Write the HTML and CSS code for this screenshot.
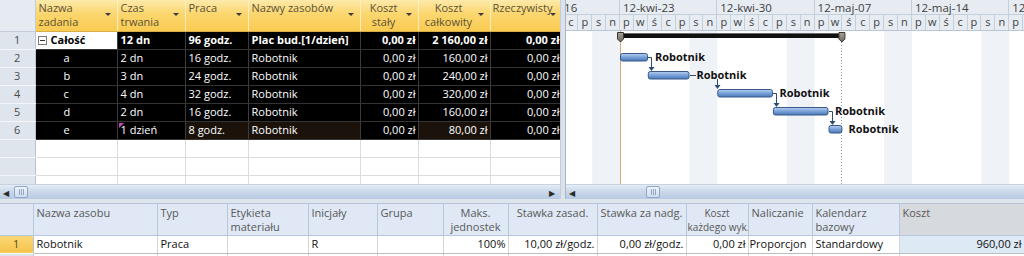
FILE: index.html
```html
<!DOCTYPE html>
<html lang="pl">
<head>
  <meta charset="UTF-8">
  <title>Projekt - Wykres Gantta</title>
  <link rel="stylesheet" href="styles.css">
</head>
<body>
<div class="app">
  <div class="top">
    <!-- Task sheet -->
    <div class="task-pane">
      <table class="tasks">
        <colgroup>
          <col style="width:35px"><col style="width:82px"><col style="width:68px"><col style="width:63px">
          <col style="width:112px"><col style="width:58px"><col style="width:72px"><col style="width:72px">
        </colgroup>
        <thead>
          <tr>
            <th class="corner"></th>
            <th class="dd">Nazwa<br>zadania</th>
            <th class="dd">Czas<br>trwania</th>
            <th class="dd">Praca</th>
            <th class="dd">Nazwy zasobów</th>
            <th class="dd center">Koszt<br>stały</th>
            <th class="dd center">Koszt<br>całkowity</th>
            <th class="dd last">Rzeczywisty</th>
          </tr>
        </thead>
        <tbody>
          <tr class="summary">
            <td class="rn">1</td>
            <td class="sel"><svg class="collapse" width="9" height="9" viewBox="0 0 9 9"><rect x="0.5" y="0.5" width="8" height="8" fill="#fff" stroke="#7b7b7b"/><path d="M2 4.5H7" stroke="#333"/></svg>Całość</td>
            <td>12 dn</td>
            <td>96 godz.</td>
            <td>Plac bud.[1/dzień]</td>
            <td class="num">0,00 zł</td>
            <td class="num">2 160,00 zł</td>
            <td class="num">0,00 zł</td>
          </tr>
          <tr>
            <td class="rn">2</td><td class="sub">a</td><td>2 dn</td><td>16 godz.</td><td>Robotnik</td>
            <td class="num">0,00 zł</td><td class="num">160,00 zł</td><td class="num">0,00 zł</td>
          </tr>
          <tr>
            <td class="rn">3</td><td class="sub">b</td><td>3 dn</td><td>24 godz.</td><td>Robotnik</td>
            <td class="num">0,00 zł</td><td class="num">240,00 zł</td><td class="num">0,00 zł</td>
          </tr>
          <tr>
            <td class="rn">4</td><td class="sub">c</td><td>4 dn</td><td>32 godz.</td><td>Robotnik</td>
            <td class="num">0,00 zł</td><td class="num">320,00 zł</td><td class="num">0,00 zł</td>
          </tr>
          <tr>
            <td class="rn">5</td><td class="sub">d</td><td>2 dn</td><td>16 godz.</td><td>Robotnik</td>
            <td class="num">0,00 zł</td><td class="num">160,00 zł</td><td class="num">0,00 zł</td>
          </tr>
          <tr>
            <td class="rn">6</td><td class="sub">e</td><td class="flag">1 dzień</td><td class="changed">8 godz.</td><td class="changed">Robotnik</td>
            <td class="num">0,00 zł</td><td class="num changed">80,00 zł</td><td class="num">0,00 zł</td>
          </tr>
          <tr class="blank"><td class="rn"></td><td></td><td></td><td></td><td></td><td></td><td></td><td></td></tr>
          <tr class="blank"><td class="rn"></td><td></td><td></td><td></td><td></td><td></td><td></td><td></td></tr>
          <tr class="blank"><td class="rn"></td><td></td><td></td><td></td><td></td><td></td><td></td><td></td></tr>
        </tbody>
      </table>
    </div>

    <div class="splitter"></div>

    <!-- Gantt chart -->
    <div class="gantt">
      <div class="scale">
        <div class="week">
          <div class="week-label">12-kwi-16</div>
          <div class="week-days"><span>p</span><span>w</span><span>ś</span><span>c</span><span>p</span><span>s</span><span>n</span></div>
        </div>
        <div class="week">
          <div class="week-label">12-kwi-23</div>
          <div class="week-days"><span>p</span><span>w</span><span>ś</span><span>c</span><span>p</span><span>s</span><span>n</span></div>
        </div>
        <div class="week">
          <div class="week-label">12-kwi-30</div>
          <div class="week-days"><span>p</span><span>w</span><span>ś</span><span>c</span><span>p</span><span>s</span><span>n</span></div>
        </div>
        <div class="week">
          <div class="week-label">12-maj-07</div>
          <div class="week-days"><span>p</span><span>w</span><span>ś</span><span>c</span><span>p</span><span>s</span><span>n</span></div>
        </div>
        <div class="week">
          <div class="week-label">12-maj-14</div>
          <div class="week-days"><span>p</span><span>w</span><span>ś</span><span>c</span><span>p</span><span>s</span><span>n</span></div>
        </div>
        <div class="week">
          <div class="week-label">12-maj-21</div>
          <div class="week-days"><span>p</span><span>w</span><span>ś</span><span>c</span><span>p</span><span>s</span><span>n</span></div>
        </div>
      </div>

      <svg class="chart" width="458" height="153" viewBox="0 0 458 153">
        <defs>
          <linearGradient id="barFill" x1="0" y1="0" x2="0" y2="1">
            <stop offset="0" stop-color="#b9d0ee"/>
            <stop offset="0.45" stop-color="#7ea6dc"/>
            <stop offset="1" stop-color="#4a78b8"/>
          </linearGradient>
          <linearGradient id="capFill" x1="0" y1="0" x2="0" y2="1">
            <stop offset="0" stop-color="#a8a29a"/>
            <stop offset="1" stop-color="#6d665e"/>
          </linearGradient>
        </defs>

        <!-- weekends -->
        <g fill="#eff2f7">
          <rect x="26.2" y="0" width="27.8" height="153"/>
          <rect x="123.5" y="0" width="27.8" height="153"/>
          <rect x="220.8" y="0" width="27.8" height="153"/>
          <rect x="318.1" y="0" width="27.8" height="153"/>
          <rect x="415.4" y="0" width="27.8" height="153"/>
        </g>

        <!-- project start / finish -->
        <line x1="54.5" y1="0" x2="54.5" y2="153" stroke="#e0a878"/>
        <line x1="275.5" y1="8" x2="275.5" y2="153" stroke="#9a9a9a" stroke-dasharray="1 2"/>

        <!-- summary task -->
        <rect x="54" y="2" width="222.4" height="5" fill="#111"/>
        <rect x="54" y="2" width="222.4" height="1" fill="#6a6a6a"/>
        <polygon points="51.5,1.5 57.5,1.5 57.5,8 54.5,11 51.5,8" fill="url(#capFill)" stroke="#3b3630"/>
        <polygon points="272.9,1.5 278.9,1.5 278.9,8 275.9,11 272.9,8" fill="url(#capFill)" stroke="#3b3630"/>

        <!-- links -->
        <g stroke="#2c4c78" fill="none">
          <path d="M82 26.5H85.5V37"/>
          <path d="M124 44.5H130"/>
          <path d="M151.5 48V55"/>
          <path d="M207 62.5H210.5V73"/>
          <path d="M263 80.5H266.5V91"/>
        </g>
        <g fill="#2c4c78">
          <polygon points="82.5,36 88.5,36 85.5,40"/>
          <polygon points="148.5,54 154.5,54 151.5,58"/>
          <polygon points="207.5,72 213.5,72 210.5,76"/>
          <polygon points="263.5,90 269.5,90 266.5,94"/>
        </g>

        <!-- task bars -->
        <g fill="url(#barFill)" stroke="#36598a">
          <rect x="54.5" y="22.5" width="27" height="7.5" rx="2"/>
          <rect x="82.3" y="40.5" width="40.7" height="7.5" rx="2"/>
          <rect x="151.8" y="58.5" width="54.6" height="7.5" rx="2"/>
          <rect x="207.4" y="76.5" width="54.6" height="7.5" rx="2"/>
          <rect x="263" y="94.5" width="12.9" height="7.5" rx="2"/>
        </g>

        <g class="bar-label">
          <text x="89" y="30">Robotnik</text>
          <text x="130.5" y="48">Robotnik</text>
          <text x="213.5" y="66">Robotnik</text>
          <text x="269" y="84">Robotnik</text>
          <text x="282.5" y="102">Robotnik</text>
        </g>
      </svg>
    </div>
  </div>

  <!-- Scroll bars -->
  <div class="hscroll">
    <div class="sb sb-tasks">
      <span class="arrow">&#9664;</span>
      <span class="thumb"></span>
      <span class="fill"></span>
      <span class="arrow">&#9654;</span>
    </div>
    <div class="sb-split"></div>
    <div class="sb sb-gantt">
      <span class="arrow">&#9664;</span>
      <span class="track"></span>
      <span class="thumb"></span>
    </div>
  </div>

  <div class="view-gap"></div>

  <!-- Resource sheet -->
  <table class="res">
    <colgroup>
      <col style="width:33px"><col style="width:124px"><col style="width:70px"><col style="width:81px">
      <col style="width:69px"><col style="width:66px"><col style="width:65px"><col style="width:89px">
      <col style="width:89px"><col style="width:62px"><col style="width:64px"><col style="width:87px">
      <col style="width:125px">
    </colgroup>
    <thead>
      <tr>
        <th></th>
        <th>Nazwa zasobu</th>
        <th>Typ</th>
        <th>Etykieta<br>materiału</th>
        <th>Inicjały</th>
        <th>Grupa</th>
        <th class="center">Maks.<br>jednostek</th>
        <th class="center">Stawka zasad.</th>
        <th>Stawka za nadg.</th>
        <th class="center tight">Koszt<br>każdego wyk.</th>
        <th>Naliczanie</th>
        <th>Kalendarz<br>bazowy</th>
        <th class="cost">Koszt</th>
      </tr>
    </thead>
    <tbody>
      <tr>
        <td class="rn">1</td>
        <td>Robotnik</td>
        <td>Praca</td>
        <td></td>
        <td>R</td>
        <td></td>
        <td class="num">100%</td>
        <td class="num">10,00 zł/godz.</td>
        <td class="num">0,00 zł/godz.</td>
        <td class="num">0,00 zł</td>
        <td class="tight">Proporcjon</td>
        <td>Standardowy</td>
        <td class="num cost">960,00 zł</td>
      </tr>
      <tr class="blank"><td class="rn"></td><td></td><td></td><td></td><td></td><td></td><td></td><td></td><td></td><td></td><td></td><td></td><td></td></tr>
    </tbody>
  </table>
</div>
</body>
</html>
```

FILE: styles.css
```css
* {
  box-sizing: border-box;
}
body {
  margin: 0;
  font-family: "Open Sans", "Liberation Sans", sans-serif;
  font-size: 11px;
  background-color: #fff;
  color: #222;
}
.app {
  width: 1024px;
  height: 256px;
  overflow: hidden;
  display: flex;
  flex-direction: column;
}
.top {
  display: flex;
  height: 184px;
  flex: none;
}
table {
  border-collapse: collapse;
  table-layout: fixed;
}
th, td {
  padding: 0 3px;
  white-space: nowrap;
  overflow: hidden;
}

/* Task sheet */
.task-pane {
  width: 560px;
  flex: none;
  overflow: hidden;
}
.tasks {
  width: 562px;
}
.tasks thead tr {
  height: 31px;
}
.tasks th {
  position: relative;
  background: linear-gradient(#fde9aa, #fbd66e 45%, #f9cb52);
  color: #5b5236;
  font-weight: normal;
  text-align: left;
  vertical-align: top;
  line-height: 14px;
  padding-top: 1px;
  border-right: 1px solid #fbeec4;
  border-bottom: 1px solid #d9ad45;
}
.tasks th.corner {
  background: #e6ebf1;
  border-right: 1px solid #c3ccd8;
  border-bottom: 1px solid #c3ccd8;
}
.tasks th.center {
  text-align: center;
  padding-right: 14px;
}
.tasks th.dd::after {
  content: "";
  position: absolute;
  right: 6px;
  top: 13px;
  border-left: 3px solid transparent;
  border-right: 3px solid transparent;
  border-top: 3px solid #3c3c3c;
}
.tasks th.last {
  padding-left: 2px;
}
.tasks tbody tr {
  height: 18px;
}
.tasks td {
  background: #000;
  color: #fff;
  border-right: 1px solid #3b3b3b;
  border-bottom: 1px solid #343434;
  line-height: 16px;
}
.tasks td.rn,
.res td.rn {
  background: #dfe5ed;
  color: #4b4b4b;
  text-align: center;
  border-right: 1px solid #b9c4d2;
  border-bottom: 1px solid #f4f6f9;
}
.tasks td.num {
  text-align: right;
  padding-right: 2px;
}
.tasks td.sub {
  padding-left: 28px;
}
.tasks td.changed {
  background: #1b130b;
}
.tasks td.flag {
  position: relative;
}
.tasks td.flag::before {
  content: "";
  position: absolute;
  left: 1px;
  top: 1px;
  border-top: 5px solid #c54ab8;
  border-right: 5px solid transparent;
}
.summary td {
  font-weight: bold;
}
.summary td.rn {
  font-weight: normal;
}
.tasks td.sel {
  background: #fff;
  color: #000;
  padding-left: 2px;
}
.collapse {
  vertical-align: -1px;
  margin-right: 4px;
}
.tasks .blank td {
  background: #fff;
  border-right: 1px solid #dcdcdc;
  border-bottom: 1px solid #dcdcdc;
}
.tasks .blank td.rn {
  background: #dfe5ed;
  border-right: 1px solid #b9c4d2;
  border-bottom: 1px solid #f4f6f9;
}

/* Splitter between sheet and chart */
.splitter {
  width: 6px;
  flex: none;
  background: #dbe2eb;
  border-left: 1px solid #c4cedb;
  border-right: 1px solid #a9b7c9;
}

/* Gantt */
.gantt {
  width: 458px;
  flex: none;
  overflow: hidden;
  display: flex;
  flex-direction: column;
}
.scale {
  display: flex;
  height: 31px;
  flex: none;
  margin-left: -43.3px;
  background: #e7ecf3;
  border-bottom: 1px solid #b8c5d6;
  color: #3e3e3e;
}
.week {
  width: 97.3px;
  flex: none;
}
.week-label {
  height: 15px;
  line-height: 15px;
  padding-left: 3px;
  border-right: 1px solid #c4cfdc;
  border-bottom: 1px solid #c4cfdc;
  white-space: nowrap;
  font-size: 11.5px;
}
.week-days {
  display: flex;
  height: 15px;
  line-height: 14px;
}
.week-days span {
  flex: 1;
  text-align: center;
  border-right: 1px solid #c4cfdc;
}
.chart {
  display: block;
  flex: none;
}
.bar-label text {
  font-family: "Open Sans", "Liberation Sans", sans-serif;
  font-size: 11px;
  font-weight: bold;
  fill: #111;
}

/* Scroll bars */
.hscroll {
  display: flex;
  height: 15px;
  flex: none;
}
.sb {
  display: flex;
  align-items: center;
  background: linear-gradient(#e4ecf6, #cbd9ea 45%, #b7cae2);
  border-top: 1px solid #c7d3e3;
}
.sb-tasks {
  width: 560px;
  padding: 0 3px 0 3px;
}
.sb-split {
  width: 6px;
  background: #dbe2eb;
  border-left: 1px solid #c4cedb;
  border-right: 1px solid #a9b7c9;
}
.sb-gantt {
  width: 458px;
  padding-left: 3px;
}
.arrow {
  font-size: 8px;
  color: #2b2b2b;
  width: 8px;
}
.thumb {
  width: 14px;
  height: 12px;
  margin-left: 3px;
  border: 1px solid #8fa6c5;
  border-radius: 2px;
  background:
    linear-gradient(90deg, transparent 4px, #8fa6c5 4px, #8fa6c5 5px, transparent 5px, transparent 6px, #8fa6c5 6px, #8fa6c5 7px, transparent 7px, transparent 8px, #8fa6c5 8px, #8fa6c5 9px, transparent 9px) center / 100% 6px no-repeat,
    linear-gradient(#eef3fa, #cfdcee);
}
.fill {
  flex: 1;
}
.track {
  width: 66px;
}

/* Gap between views */
.view-gap {
  height: 5px;
  flex: none;
  background: #dfe5ed;
  border-bottom: 1px solid #b7c4d5;
}

/* Resource sheet */
.res {
  width: 1024px;
}
.res thead tr {
  height: 31px;
}
.res th {
  background: #dfe8f4;
  color: #585858;
  font-weight: normal;
  text-align: left;
  vertical-align: top;
  line-height: 14px;
  padding-top: 2px;
  border-right: 1px solid #b8c8dc;
  border-bottom: 1px solid #b8c8dc;
}
.res th.center {
  text-align: center;
}
.res .tight {
  padding: 0 1px;
}
.res th.tight {
  padding-top: 2px;
  font-size: 10px;
}
.res th.cost {
  background: #d6d9dd;
  border-right: none;
}
.res tbody tr {
  height: 18px;
}
.res td {
  color: #111;
  border-right: 1px solid #d4d4d4;
  border-bottom: 1px solid #bdbdbd;
  line-height: 16px;
}
.res td.rn {
  background: linear-gradient(#fbd878, #f6c34b);
  color: #5b4a1f;
}
.res td.num {
  text-align: right;
  padding-right: 2px;
}
.res td.cost {
  background: #dee9f6;
}
.res .blank td.rn {
  background: #dfe5ed;
}
```
